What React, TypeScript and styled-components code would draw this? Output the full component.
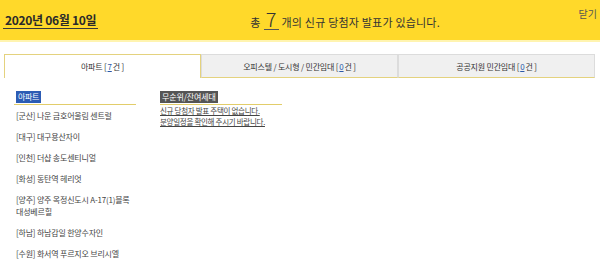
import styled, { createGlobalStyle } from "styled-components";

const GlobalStyle = createGlobalStyle`
	body {
		margin: 0;
		background: #ffffff;
		font-family: "Noto Sans CJK KR", "Noto Sans", sans-serif;
		color: #333;
	}
`;

const Header = styled.header`
	height: 40px;
	background: #ffd92a;
	border-bottom: 2px solid #fff4b0;
	display: flex;
	align-items: flex-start;
	padding: 0 3px;
`;

const DateTitle = styled.h1`
	margin: 11px 0 0;
	font-size: 12px;
	font-weight: 700;
	letter-spacing: -0.3px;
	color: #2a2a2a;
	line-height: 17px;
	padding: 0 2px;
	border-bottom: 1px solid #3a3a3a;
`;

const Message = styled.p`
	margin: 9px 0 0 152px;
	font-size: 11px;
	letter-spacing: 0.2px;
	color: #333;
	display: flex;
	align-items: baseline;
	gap: 3px;
`;

const Count = styled.span`
	font-size: 20px;
	font-weight: 300;
	line-height: 20px;
	padding: 0 2px;
	border-bottom: 1px solid #555;
`;

const Close = styled.button`
	margin: 6px 0 0 auto;
	border: 0;
	background: none;
	padding: 0;
	font-family: inherit;
	font-size: 10px;
	color: #555;
	cursor: pointer;
`;

const TabBar = styled.nav`
	display: flex;
	margin: 12px 5px 0 4px;
`;

const Tab = styled.div<{ $active?: boolean }>`
	flex: 1;
	height: 24px;
	box-sizing: border-box;
	display: flex;
	align-items: center;
	justify-content: center;
	font-size: 8px;
	letter-spacing: -0.2px;
	color: #333;
	background: ${(p) => (p.$active ? "#ffffff" : "#f0f0f0")};
	border: 1px solid ${(p) => (p.$active ? "#e4d27e" : "#dcdcdc")};
	border-bottom: ${(p) => (p.$active ? "none" : "1px solid #e4d27e")};
	border-left: ${(p) => (p.$active ? "1px solid #e4d27e" : "none")};
	& + & {
		border-left: 1px solid #dcdcdc;
	}
`;

const Num = styled.u`
	color: #2b58a8;
	margin: 0 1px;
`;

const Content = styled.main`
	display: flex;
	gap: 24px;
	padding: 13px 0 0 14px;
`;

const Column = styled.section`
	width: 122px;
`;

const Heading = styled.div<{ $indent?: boolean }>`
	display: flex;
	border-bottom: 1px solid #e2cd6a;
	padding: 0 0 1px ${(p) => (p.$indent ? "2px" : "0")};
`;

const Label = styled.span<{ $tone: "blue" | "grey" }>`
	display: block;
	background: ${(p) => (p.$tone === "blue" ? "#2c5cb4" : "#555555")};
	color: #fff;
	font-size: 8px;
	line-height: 12px;
	padding: 0 2px;
	letter-spacing: ${(p) => (p.$tone === "blue" ? "-0.4px" : "-0.1px")};
`;

const List = styled.ul`
	list-style: none;
	margin: 0;
	padding: 0 0 0 2px;
`;

const Item = styled.li`
	font-size: 8px;
	line-height: 12px;
	letter-spacing: -0.2px;
	color: #444;
	padding: 4.5px 0;
	word-break: keep-all;
	cursor: pointer;
`;

const Notice = styled.p`
	margin: 0;
	font-size: 7.5px;
	line-height: 11px;
	letter-spacing: -0.3px;
	color: #444;
	text-decoration: underline;
`;

const apartments = [
	["군산", "나운 금호어울림 센트럴"],
	["대구", "대구용산자이"],
	["인천", "더샵 송도센티니얼"],
	["화성", "동탄역 헤리엇"],
	["양주", "양주 옥정신도시 A-17(1)블록 대성베르힐"],
	["하남", "하남감일 한양수자인"],
	["수원", "화서역 푸르지오 브리시엘"],
];

function App() {
	return (
		<>
			<GlobalStyle />
			<Header>
				<DateTitle>2020년 06월 10일</DateTitle>
				<Message>
					총 <Count>7</Count> 개의 신규 당첨자 발표가 있습니다.
				</Message>
				<Close>닫기</Close>
			</Header>
			<TabBar>
				<Tab $active>
					아파트 [ <Num>7</Num>건 ]
				</Tab>
				<Tab>
					오피스텔 / 도시형 / 민간임대 [ <Num>0</Num>건 ]
				</Tab>
				<Tab>
					공공지원 민간임대 [ <Num>0</Num>건 ]
				</Tab>
			</TabBar>
			<Content>
				<Column>
					<Heading $indent>
						<Label $tone="blue">아파트</Label>
					</Heading>
					<List>
						{apartments.map(([area, name]) => (
							<Item key={name}>{`[${area}] ${name}`}</Item>
						))}
					</List>
				</Column>
				<Column>
					<Heading>
						<Label $tone="grey">무순위/잔여세대</Label>
					</Heading>
					<Notice>
						신규 당첨자 발표 주택이 없습니다.
						<br />
						분양일정을 확인해 주시기 바랍니다.
					</Notice>
				</Column>
			</Content>
		</>
	);
}

export default App;
